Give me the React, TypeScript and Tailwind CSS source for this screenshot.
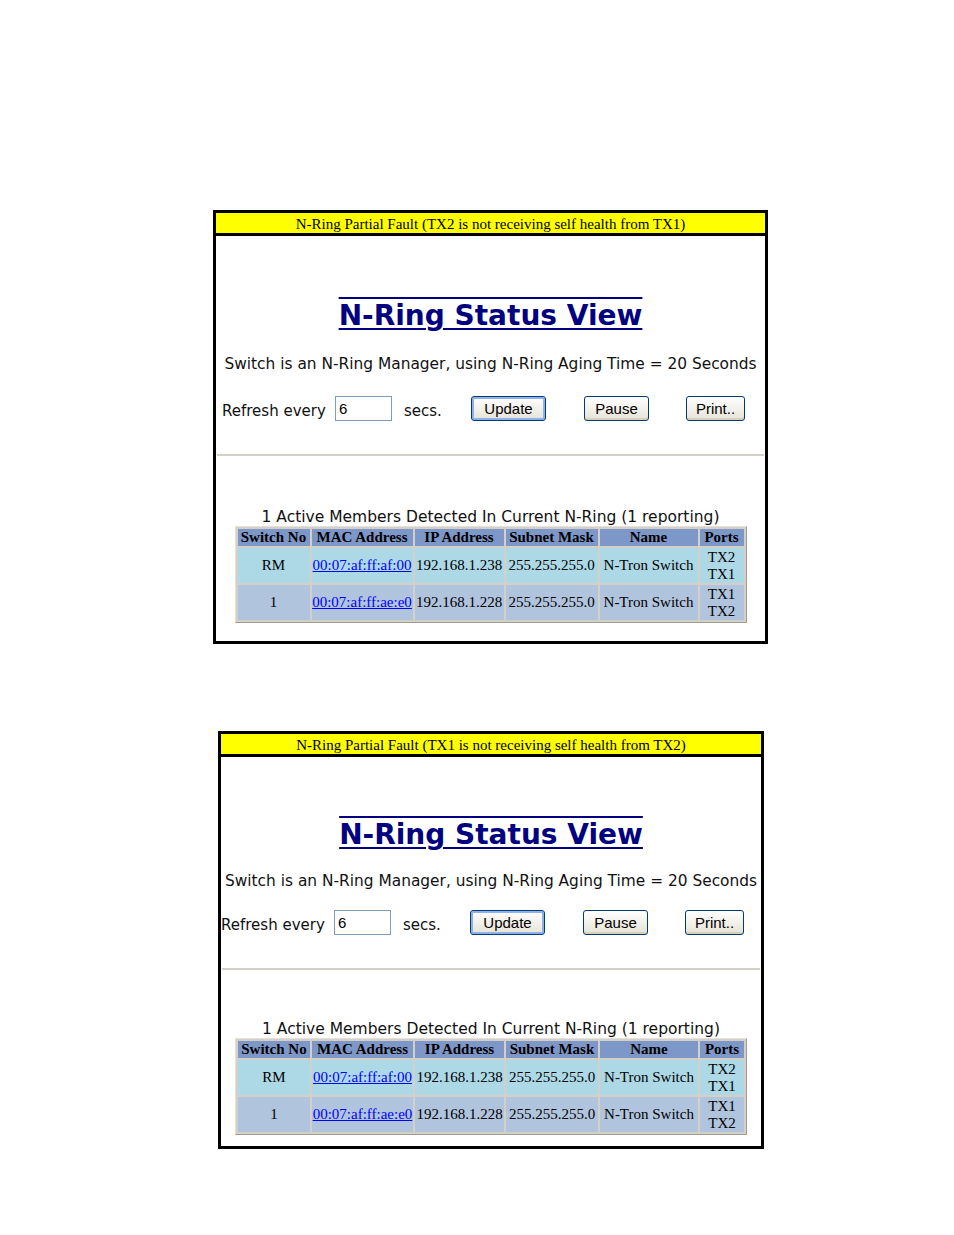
import React from "react";

type Member = {
  no: string;
  mac: string;
  ip: string;
  mask: string;
  name: string;
  ports: [string, string];
  bg: string;
};

const members: Member[] = [
  { no: "RM", mac: "00:07:af:ff:af:00", ip: "192.168.1.238", mask: "255.255.255.0", name: "N-Tron Switch", ports: ["TX2", "TX1"], bg: "bg-[#add8e6]" },
  { no: "1", mac: "00:07:af:ff:ae:e0", ip: "192.168.1.228", mask: "255.255.255.0", name: "N-Tron Switch", ports: ["TX1", "TX2"], bg: "bg-[#b0c4de]" },
];

const verdana = "font-['DejaVu_Sans',Verdana,sans-serif]";
const times = "font-['Liberation_Serif','Times_New_Roman',serif]";
const arial = "font-['Liberation_Sans',Arial,sans-serif]";

function XpButton({ label, width, focused }: { label: string; width: string; focused?: boolean }) {
  return (
    <button
      className={`${width} h-[25px] rounded-[3px] border border-[#003c74] bg-gradient-to-b from-white to-[#e6e3d6] ${arial} text-[15px] leading-none text-black ${
        focused ? "shadow-[inset_0_0_0_2px_#8fb0ea]" : "shadow-[inset_0_-2px_0_#d6d0c0]"
      }`}
    >
      {label}
    </button>
  );
}

interface PanelProps {
  fault: string;
  outer: string;
  titleGap: string;
  subGap: string;
  rowGap: string;
  hrGap: string;
  capGap: string;
  rowPad: string;
}

function StatusPanel({ fault, outer, titleGap, subGap, rowGap, hrGap, capGap, rowPad }: PanelProps) {
  return (
    <div className={`${outer} border-[3px] border-black bg-white`}>
      {/* fault banner */}
      <div className={`h-[23px] bg-[#ffff00] border-b-[3px] border-black text-center ${times} text-[15px] leading-[22px] text-black whitespace-nowrap`}>
        {fault}
      </div>

      <div className={`${titleGap} text-center`}>
        <a
          href="#"
          className={`${verdana} text-[28px] font-bold leading-[34px] text-[#000080] [text-decoration-line:underline_overline] decoration-[#000080] decoration-[2px] underline-offset-[3px]`}
        >
          N-Ring Status View
        </a>
      </div>

      <div className={`${subGap} text-center ${verdana} text-[15.4px] leading-[20px] text-[#111] whitespace-nowrap`}>
        Switch is an N-Ring Manager, using N-Ring Aging Time = 20 Seconds
      </div>

      {/* refresh controls */}
      <div className={`${rowGap} ${rowPad} flex items-center ${verdana} text-[15px] text-[#111]`}>
        <span className="w-[113px] self-end leading-[20px]">Refresh every</span>
        <input
          defaultValue="6"
          className={`w-[57px] h-[25px] border border-[#7f9db9] px-[3px] ${arial} text-[15px] text-black outline-none`}
        />
        <span className="ml-[12px] w-[67px] self-end leading-[20px]">secs.</span>
        <XpButton label="Update" width="w-[75px]" focused />
        <span className="ml-[38px]">
          <XpButton label="Pause" width="w-[65px]" />
        </span>
        <span className="ml-[37px]">
          <XpButton label="Print.." width="w-[59px]" />
        </span>
      </div>

      <div className={`${hrGap} mx-[1px] h-[2px] bg-[#d4d0c8]`} />

      <div className={`${capGap} text-center ${verdana} text-[15.5px] leading-[18px] text-[#111] whitespace-nowrap`}>
        1 Active Members Detected In Current N-Ring (1 reporting)
      </div>

      <div className="flex justify-center">
        <table className={`border-separate border-spacing-[2px] border border-t-[#e4e1d8] border-l-[#e4e1d8] border-b-[#a09c90] border-r-[#a09c90] bg-[#d4d0c8] ${times} text-[15px] text-black`}>
          <thead>
            <tr className="bg-[#7d97c8] h-[17px] leading-[17px]">
              <th className="w-[72px] p-0 font-bold">Switch No</th>
              <th className="w-[101px] p-0 font-bold">MAC Address</th>
              <th className="w-[89px] p-0 font-bold">IP Address</th>
              <th className="w-[92px] p-0 font-bold">Subnet Mask</th>
              <th className="w-[98px] p-0 font-bold">Name</th>
              <th className="w-[44px] p-0 font-bold">Ports</th>
            </tr>
          </thead>
          <tbody>
            {members.map((m) => (
              <tr key={m.mac} className={`${m.bg} h-[35px] text-center`}>
                <td className="p-0">{m.no}</td>
                <td className="p-0">
                  <a href="#" className="text-[#0000ff] underline">
                    {m.mac}
                  </a>
                </td>
                <td className="p-0">{m.ip}</td>
                <td className="p-0">{m.mask}</td>
                <td className="p-0">{m.name}</td>
                <td className="p-0 leading-[17px]">
                  {m.ports[0]}
                  <br />
                  {m.ports[1]}
                </td>
              </tr>
            ))}
          </tbody>
        </table>
      </div>
    </div>
  );
}

export default function App() {
  return (
    <div className="min-h-[1235px] w-[954px] bg-white pt-[210px]">
      <StatusPanel
        fault="N-Ring Partial Fault (TX2 is not receiving self health from TX1)"
        outer="ml-[213px] w-[555px] h-[434px]"
        titleGap="mt-[63px]"
        subGap="mt-[21px]"
        rowGap="mt-[22px]"
        hrGap="mt-[33px]"
        capGap="mt-[52px]"
        rowPad="pl-[6px]"
      />
      <div className="h-[87px]" />
      <StatusPanel
        fault="N-Ring Partial Fault (TX1 is not receiving self health from TX2)"
        outer="ml-[218px] w-[546px] h-[418px]"
        titleGap="mt-[61px]"
        subGap="mt-[19px]"
        rowGap="mt-[19px]"
        hrGap="mt-[33px]"
        capGap="mt-[50px]"
        rowPad="pl-0"
      />
    </div>
  );
}
